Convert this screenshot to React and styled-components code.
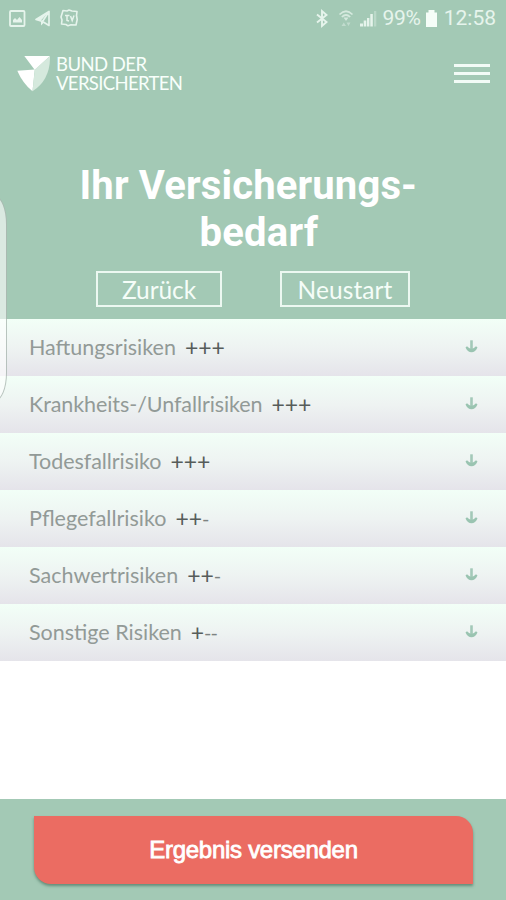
import styled, { createGlobalStyle } from "styled-components";

const GlobalStyle = createGlobalStyle`
  * {
    box-sizing: border-box;
  }
  body {
    margin: 0;
    background-color: #ffffff;
    font-family: Lato, "Open Sans", sans-serif;
  }
`;

const Screen = styled.div`
  position: relative;
  display: flex;
  flex-direction: column;
  width: 506px;
  height: 900px;
  overflow: hidden;
  background-color: #ffffff;
`;

const Header = styled.header`
  display: flex;
  flex-direction: column;
  height: 319px;
  flex-shrink: 0;
  background-color: #a3c9b5;
`;

const StatusBar = styled.div`
  display: flex;
  justify-content: space-between;
  align-items: center;
  height: 36px;
  padding: 0 10px 0 9px;
  color: #e6f4ec;
`;

const StatusGroup = styled.div`
  display: flex;
  align-items: center;
`;

const StatusIcon = styled.svg`
  display: block;
  margin-left: ${(props) => props.$gap || 0}px;
  overflow: visible;
`;

const StatusText = styled.span`
  margin-left: ${(props) => props.$gap}px;
  font-family: Roboto, sans-serif;
  font-size: 21px;
  line-height: 36px;
  letter-spacing: ${(props) => props.$spacing}px;
`;

const NavBar = styled.div`
  display: flex;
  justify-content: space-between;
  align-items: flex-start;
  height: 132px;
  padding: 18px 16px 0 17px;
`;

const Brand = styled.div`
  display: flex;
  align-items: flex-start;
`;

const BrandName = styled.div`
  margin-left: 6px;
  padding-top: 1px;
  font-size: 18.5px;
  line-height: 18.5px;
  color: #f8fffb;
`;

const BrandLine = styled.span`
  display: block;
  width: max-content;
  letter-spacing: ${(props) => props.$spacing}px;
`;

const MenuButton = styled.button`
  display: flex;
  flex-direction: column;
  gap: 5px;
  width: 36px;
  margin-top: 9.5px;
  padding: 0;
  border: none;
  background: none;
`;

const MenuLine = styled.span`
  height: 3px;
  background-color: #f2fbf6;
`;

const Title = styled.h1`
  display: flex;
  flex-direction: column;
  height: 94px;
  margin: -5px 0 0;
  font-family: Roboto, sans-serif;
  font-size: 40px;
  font-weight: 700;
  line-height: 46px;
  color: #ffffff;
`;

const TitleLine = styled.span`
  padding-left: ${(props) => props.$indent}px;
  letter-spacing: ${(props) => props.$spacing}px;
  white-space: nowrap;

  & + & {
    margin-top: 1px;
  }
`;

const Actions = styled.div`
  display: flex;
  gap: 58px;
  padding: 14px 0 0 96px;
`;

const OutlineButton = styled.button`
  width: ${(props) => props.$width}px;
  height: 36px;
  padding: 0;
  border: 2px solid #ecf8f1;
  background: none;
  font-family: Lato, sans-serif;
  font-size: 24.5px;
  line-height: 33px;
  letter-spacing: ${(props) => props.$spacing}px;
  color: #f5fdf8;
`;

const RiskList = styled.ul`
  margin: 0;
  padding: 0;
  list-style: none;
`;

const RiskRow = styled.li`
  display: flex;
  align-items: center;
  height: 57px;
  padding: 0 28px 0 29px;
  background: linear-gradient(#f2fff7, #eef3f2 50%, #e5e4ea);
`;

const RiskName = styled.span`
  font-size: 21.5px;
  line-height: 57px;
  letter-spacing: ${(props) => props.$spacing}px;
  color: #929a97;
`;

const Rating = styled.span`
  display: flex;
  flex: 1;
  margin-left: 9px;
`;

const Sign = styled.span`
  width: ${(props) => (props.$minus ? 6.5 : 13.3)}px;
  font-family: Lato, sans-serif;
  font-size: ${(props) => (props.$minus ? 20 : 23)}px;
  line-height: 57px;
  text-align: center;
  color: ${(props) => (props.$minus ? "#7d8381" : "#565c5a")};
`;

const Arrow = styled.svg`
  display: block;
  margin-top: -2px;
`;

const Footer = styled.footer`
  height: 101px;
  margin-top: auto;
  padding: 17px 33px 0 34px;
  background-color: #a3c9b5;
`;

const SendButton = styled.button`
  display: block;
  width: 439px;
  height: 68px;
  padding: 0;
  border: none;
  border-radius: 0 17px 0 17px;
  background-color: #eb6c62;
  box-shadow: 0 2px 3px rgba(60, 100, 80, 0.6);
  font-family: "Liberation Sans", Arial, sans-serif;
  font-size: 24px;
  letter-spacing: -0.28px;
  -webkit-text-stroke: 0.8px #ffffff;
  color: #ffffff;
`;

const EdgeHandle = styled.div`
  position: absolute;
  top: 196px;
  left: -20px;
  width: 27px;
  height: 205px;
  border: 1px solid rgba(120, 140, 130, 0.5);
  border-radius: 0 12px 12px 0 / 0 28px 28px 0;
  background-color: rgba(255, 255, 255, 0.6);
`;

const risks = [
  { name: "Haftungsrisiken", rating: "+++", spacing: 0 },
  { name: "Krankheits-/Unfallrisiken", rating: "+++", spacing: -0.08 },
  { name: "Todesfallrisiko", rating: "+++", spacing: -0.05 },
  { name: "Pflegefallrisiko", rating: "++-", spacing: 0 },
  { name: "Sachwertrisiken", rating: "++-", spacing: 0 },
  { name: "Sonstige Risiken", rating: "+--", spacing: 0 },
];

function PhoneStatus() {
  return (
    <StatusBar>
      <StatusGroup>
        <StatusIcon width="17" height="17" viewBox="0 0 17 17">
          <rect x="1" y="1" width="14.5" height="15" rx="1" fill="none" stroke="currentColor" strokeWidth="1.8" />
          <path d="M4 12.5V10l2-2 2 2 2.500-3 2.500 3v2.500z" fill="currentColor" />
        </StatusIcon>
        <StatusIcon $gap={9} width="16" height="17" viewBox="0 0 16 17">
          <path d="M1 9.500 14 1.500v14L7.500 11.500z M7.500 11.500 14 1.500" fill="none" stroke="currentColor" strokeWidth="1.700" strokeLinejoin="round" />
          <path d="M1 9.500 14 1.500 5.500 11z" fill="currentColor" />
          <path d="M6 11v4.500l3-3z" fill="currentColor" />
        </StatusIcon>
        <StatusIcon $gap={9} width="19" height="18" viewBox="0 0 19 18">
          <path
            d="M3 1.500 7 2l2-1 3 1 5 .5-.5 4 .7 4-1.200 5.500-5-.2-3 1-2-1.300-4.500-.5.5-4L1 8z"
            fill="none"
            stroke="currentColor"
            strokeWidth="1.600"
            strokeLinejoin="round"
          />
          <path d="M5 6.500h4.500M7 6.500v5l2 .5M10.500 7l1.700 4.500L14 6.500" fill="none" stroke="currentColor" strokeWidth="1.500" />
        </StatusIcon>
      </StatusGroup>
      <StatusGroup>
        <StatusIcon width="12" height="17" viewBox="0 0 12 17">
          <path d="M1 4.500 10.500 12 6 16V1l4.500 4L1 12.500" fill="none" stroke="currentColor" strokeWidth="1.900" />
        </StatusIcon>
        <StatusIcon $gap={11} width="14" height="17" viewBox="0 0 14 17" opacity="0.75">
          <path d="M.5 4.500Q7-2 13.500 4.500M2.800 7Q7 3 11.200 7" fill="none" stroke="currentColor" strokeWidth="1.700" />
          <path d="M4.500 7.500h5L7 11z" fill="currentColor" />
          <path d="M2.500 16 4.800 12.500 7 16zM7.500 12.500h4L9.500 16z" fill="currentColor" opacity="0.6" />
        </StatusIcon>
        <StatusIcon $gap={7} width="17" height="17" viewBox="0 0 17 17">
          <path d="M0 16.500h3v-3H0zM3.700 16.500h2.600v-6H3.700zM7 16.500h2.400V8H7zM10.300 16.500h2.500V4h-2.500z" fill="currentColor" />
          <path d="M14 16.500h2.300V1H14z" fill="currentColor" opacity="0.35" />
        </StatusIcon>
        <StatusText $gap={6} $spacing={-0.3}>99%</StatusText>
        <StatusIcon $gap={5} width="11" height="17" viewBox="0 0 11 17">
          <path d="M0 2.500h2.500V0h6v2.500H11V17H0z" fill="#f5fdf8" />
        </StatusIcon>
        <StatusText $gap={7} $spacing={0}>12:58</StatusText>
      </StatusGroup>
    </StatusBar>
  );
}

function Logo() {
  return (
    <svg width="33" height="38" viewBox="0 0 33 38">
      <path d="M7.300 2H33L17.800 16z" fill="#ffffff" />
      <path d="M.3 16.700 17.800 15.500 15.500 37.300Q5.500 29 .3 16.700z" fill="#ffffff" />
      <path d="M33 2 17.800 15.500 15.500 37.300Q33.500 26 33 2z" fill="#d5e9dd" />
    </svg>
  );
}

function App() {
  return (
    <>
      <GlobalStyle />
      <Screen>
        <Header>
          <PhoneStatus />
          <NavBar>
            <Brand>
              <Logo />
              <BrandName>
                <BrandLine $spacing={-0.55}>BUND DER</BrandLine>
                <BrandLine $spacing={-0.65}>VERSICHERTEN</BrandLine>
              </BrandName>
            </Brand>
            <MenuButton aria-label="Menü">
              <MenuLine />
              <MenuLine />
              <MenuLine />
            </MenuButton>
          </NavBar>
          <Title>
            <TitleLine $indent={79.5} $spacing={0.15}>Ihr Versicherungs-</TitleLine>
            <TitleLine $indent={199.5} $spacing={0.25}>bedarf</TitleLine>
          </Title>
          <Actions>
            <OutlineButton $width={126} $spacing={-0.1}>Zurück</OutlineButton>
            <OutlineButton $width={130} $spacing={0.1}>Neustart</OutlineButton>
          </Actions>
        </Header>
        <RiskList>
          {risks.map((risk) => (
            <RiskRow key={risk.name}>
              <RiskName $spacing={risk.spacing}>{risk.name}</RiskName>
              <Rating>
                {risk.rating.split("").map((sign, i) => (
                  <Sign key={i} $minus={sign === "-"}>{sign}</Sign>
                ))}
              </Rating>
              <Arrow width="13" height="13" viewBox="0 0 13 13">
                <path d="M6.500.3V10" fill="none" stroke="#a3c9b8" strokeWidth="2.600" />
                <path d="M.5 7.500 2 6.300Q4.500 9 6.500 9T11 6.300L12.500 7.500Q10.500 12 6.500 12.300 2.500 12 .5 7.500z" fill="#9ac4b1" />
              </Arrow>
            </RiskRow>
          ))}
        </RiskList>
        <Footer>
          <SendButton>Ergebnis versenden</SendButton>
        </Footer>
        <EdgeHandle />
      </Screen>
    </>
  );
}

export default App;
